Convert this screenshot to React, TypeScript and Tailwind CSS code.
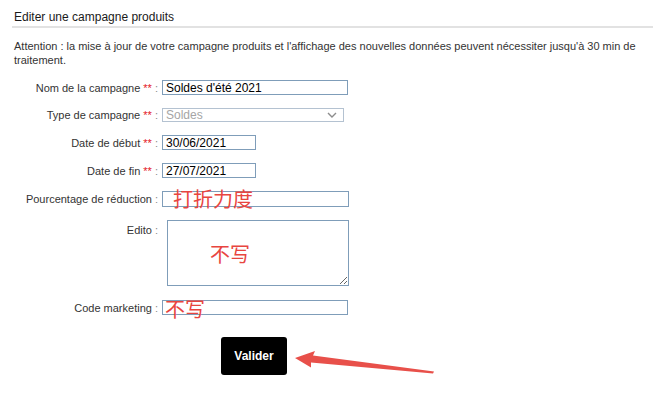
import React from "react";

const Label = ({ text, req }: { text: string; req?: boolean }) => (
  <div className="w-[158px] shrink-0 text-right text-[11px] leading-[14px] text-[#333]">
    {text}
    {req && <span className="text-[#e4161f]"> **</span>}
    <span className="text-[#8a8a8a]"> :</span>
  </div>
);

const Note = ({ text, className }: { text: string; className: string }) => (
  <span
    className={`absolute pointer-events-none whitespace-nowrap text-[20px] leading-none text-[#e8453f] font-['Noto_Sans_CJK_SC',sans-serif] ${className}`}
  >
    {text}
  </span>
);

const inputCls =
  "block h-[15px] border border-[#7f9db9] bg-white px-[3px] py-0 text-[12px] leading-none text-black outline-none font-['Liberation_Sans',Arial,sans-serif]";

export default function App() {
  return (
    <div className="relative w-[653px] h-[402px] overflow-hidden bg-white font-['Liberation_Sans',Arial,sans-serif] text-[#333]">
      <div className="pl-3 pt-[10px]">
        <h2 className="pl-[2px] pb-px text-[12px] leading-[15px] text-[#1a1a1a] border-b-2 border-[#e2e2e2]">
          Editer une campagne produits
        </h2>
      </div>

      <p className="mt-[11px] pl-[14px] text-[11px] leading-[14px] text-[#333]">
        Attention : la mise à jour de votre campagne produits et l'affichage des nouvelles données peuvent
        nécessiter jusqu'à 30 min de traitement.
      </p>

      <div className="mt-[13px] flex flex-col gap-[13px]">
        <div className="flex h-[15px] items-center">
          <Label text="Nom de la campagne" req />
          <input readOnly value="Soldes d'été 2021" className={`${inputCls} ml-[4px] w-[186px]`} />
        </div>

        <div className="flex h-[14px] items-center">
          <Label text="Type de campagne" req />
          <div className="ml-[4px] flex h-[14px] w-[182px] items-center justify-between border border-[#b4c2d1] px-[3px] text-[12px] leading-none text-[#a5a5a5]">
            <span>Soldes</span>
            <svg width="10" height="6" viewBox="0 0 10 6" className="mr-[3px]">
              <path d="M1 1l4 4 4-4" fill="none" stroke="#8d8d8d" strokeWidth="1.4" />
            </svg>
          </div>
        </div>

        <div className="flex h-[15px] items-center">
          <Label text="Date de début" req />
          <input readOnly value="30/06/2021" className={`${inputCls} ml-[4px] w-[94px]`} />
        </div>

        <div className="flex h-[15px] items-center">
          <Label text="Date de fin" req />
          <input readOnly value="27/07/2021" className={`${inputCls} ml-[4px] w-[94px]`} />
        </div>

        <div className="flex h-[16px] items-center">
          <Label text="Pourcentage de réduction" />
          <div className="relative ml-[4px] flex">
            <input readOnly value="" className={`${inputCls} h-[16px] w-[187px]`} />
            <Note text="打折力度" className="left-[11px] top-[-2px]" />
          </div>
        </div>

        <div className="flex h-[66px] items-start">
          <div className="pt-[3px]">
            <Label text="Edito" />
          </div>
          <div className="relative ml-[9px] flex">
            <textarea
              readOnly
              value=""
              className="block h-[66px] w-[182px] border border-[#7f9db9] bg-white outline-none"
            />
            <Note text="不写" className="left-[43px] top-[24px]" />
          </div>
        </div>

        <div className="mt-px flex h-[15px] items-center">
          <Label text="Code marketing" />
          <div className="relative ml-[4px] flex">
            <input readOnly value="" className={`${inputCls} w-[186px]`} />
            <Note text="不写" className="left-[3px] top-[-1px]" />
          </div>
        </div>
      </div>

      <button className="ml-[221px] mt-[22px] block h-[38px] w-[66px] rounded-[3px] bg-black text-[12px] font-bold text-white">
        Valider
      </button>

      <svg className="absolute left-0 top-0 pointer-events-none" width="653" height="402">
        <polygon
          points="295,358 315,351 313,355.5 434,371.5 433,373.5 311,362.5 311,367.5"
          fill="#e8504a"
        />
      </svg>
    </div>
  );
}
